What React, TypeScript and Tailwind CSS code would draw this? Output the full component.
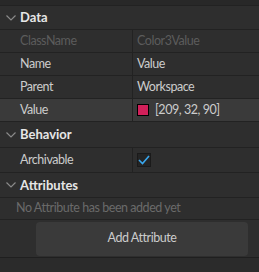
import React from "react";

const Chevron = () => (
  <svg width="10" height="6" viewBox="0 0 10 6" className="shrink-0">
    <path d="M0.5 0.5 L5 5 L9.5 0.5" fill="none" stroke="#8a8a8a" strokeWidth="1.2" />
  </svg>
);

const Header = ({ title, h }: { title: string; h: string }) => (
  <div className={`flex items-center ${h} border-b border-[#222222] bg-[#2e2e2e]`}>
    <div className="w-[20px] flex justify-center pl-[1px]">
      <Chevron />
    </div>
    <span className="font-bold text-[#e6e6e6] text-[13px] tracking-normal">{title}</span>
  </div>
);

const Row = ({
  label,
  children,
  h = "h-[23px]",
  bg = "bg-[#2e2e2e]",
  dim = false,
}: {
  label: string;
  children: React.ReactNode;
  h?: string;
  bg?: string;
  dim?: boolean;
}) => (
  <div className={`flex ${h} border-b border-[#222222] ${bg}`}>
    <div className={`w-[132px] flex items-center pl-[20px] ${dim ? "text-[#5c5c5c]" : "text-[#cccccc]"}`}>
      {label}
    </div>
    <div className="w-px bg-[#222222]" />
    <div className={`flex-1 flex items-center pl-[4px] ${dim ? "text-[#5c5c5c]" : "text-[#cccccc]"}`}>
      {children}
    </div>
  </div>
);

export default function App() {
  return (
    <div
      className="w-[259px] h-[272px] bg-[#2b2b2b] text-[12.5px] tracking-[-0.45px] leading-none overflow-hidden"
      style={{ fontFamily: "Lato, 'Noto Sans', sans-serif" }}
    >
      <div className="h-[5px] bg-[#282828] border-b border-[#222222] box-content" />
      <Header title="Data" h="h-[24px]" />
      <Row label="ClassName" dim>
        Color3Value
      </Row>
      <Row label="Name">Value</Row>
      <Row label="Parent">Workspace</Row>
      <Row label="Value" bg="bg-[#3a3a3a]">
        <div className="w-[12px] h-[12px] bg-[#d1205a] border border-black mr-[6px]" />
        <span>[209, 32, 90]</span>
      </Row>
      <Header title="Behavior" h="h-[26px]" />
      <Row label="Archivable" h="h-[25px]">
        <div className="w-[14px] h-[14px] bg-[#242424] border border-[#1a1a1a] flex items-center justify-center">
          <svg width="12" height="10" viewBox="0 0 12 10">
            <path d="M1 5 L4.5 8.5 L11 1" fill="none" stroke="#39a7ee" strokeWidth="1.6" />
          </svg>
        </div>
      </Row>
      <Header title="Attributes" h="h-[25px]" />
      <div className="h-[22px] border-b border-[#222222] bg-[#2e2e2e] flex items-center pl-[16px] text-[#6a6a6a]">
        No Attribute has been added yet
      </div>
      <div className="h-[38px] border-b border-[#1f1f1f] bg-[#2e2e2e] flex items-center pl-[36px] pr-[11px]">
        <div className="flex-1 h-[34px] rounded-[4px] bg-[#3a3a3a] flex items-center justify-center text-[#cccccc]">
          Add Attribute
        </div>
      </div>
    </div>
  );
}
